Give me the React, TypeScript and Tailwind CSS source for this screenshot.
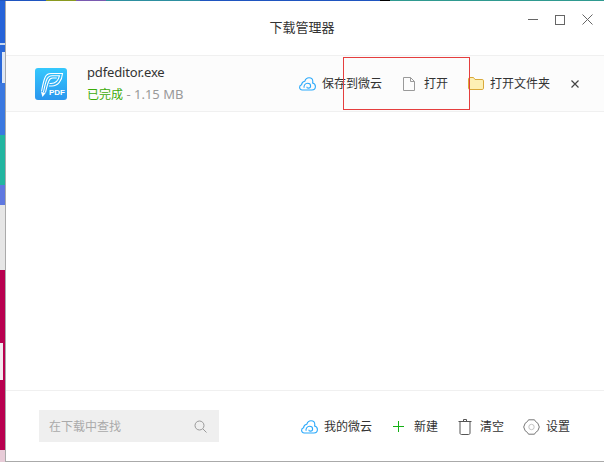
const FONT = "font-['Noto_Sans','Noto_Sans_CJK_SC',sans-serif]";

function CloudIcon() {
  return (
    <svg className="w-[17px] h-[14px]" viewBox="0 0 17 14" fill="none" stroke="#2aa9fb" strokeWidth="1.100">
      <path d="M4.500 13H3.200C1.600 13 .6 11.700.6 10.300c0-1.300.9-2.300 2-2.600C2.700 5.800 4 4.400 5.800 4.200 6.500 2.200 8 .8 10 .8c2.300 0 3.800 1.700 3.800 3.800 0 .6-.1 1-.2 1.400 1.600.4 2.800 1.800 2.800 3.500 0 2.100-1.600 3.500-3.500 3.500H4.500z" />
      <path d="M5.200 10.800C4.400 8.600 6.200 6.300 8.500 6.300c1.800 0 3.100 1.200 3.100 2.700 0 1.200-1 2.100-2.100 2.100-1 0-1.700-.6-1.700-1.400" />
    </svg>
  );
}

function FileIcon() {
  return (
    <svg className="w-[12px] h-[14px]" viewBox="0 0 12 14" fill="none" stroke="#9a9a9a">
      <path d="M.5.5h7l4 4v9h-11zM7.500.5v4h4" />
    </svg>
  );
}

function FolderIcon() {
  return (
    <svg className="w-[16px] h-[13px]" viewBox="0 0 16 13">
      <path d="M.5 2c0-.8.5-1.500 1.300-1.500h3.700l1.500 2h7.200c.8 0 1.300.5 1.300 1.300v7.400c0 .8-.5 1.300-1.300 1.300H1.800c-.8 0-1.300-.5-1.300-1.300z" fill="#fdf0b4" stroke="#d9a93a" />
    </svg>
  );
}

function PdfLogo() {
  return (
    <div className="w-[32px] h-[32px] rounded-[3px] bg-gradient-to-b from-[#35c8fd] to-[#2b96ee] relative overflow-hidden">
      <svg className="absolute inset-0" viewBox="0 0 32 32" fill="none" stroke="#fff" strokeWidth="1.100">
        <path d="M6.500 23.500C7.500 18 8.500 13 10 9.500 11 7 13 5.500 16 5.500h11.500c-.5 7-4.500 12.500-10.500 12.500h-3" />
        <path d="M8.500 24C9.500 19 10.500 14 12 11c1-2 2.500-3.300 5-3.300h7.500C23.500 12 20.500 15.500 16 15.500h-1.500" />
        <path d="M10.500 24.500C11.500 20 12.500 16 13.800 13c.8-1.800 2-3 3.700-3h4.300" />
        <path d="M6 24l4.800.8L7.500 29z" fill="#fff" stroke="none" />
      </svg>
      <span className="absolute left-[14px] top-[20px] text-[8px] leading-[10px] font-bold text-white font-['Liberation_Sans',sans-serif]">PDF</span>
    </div>
  );
}

function TrashIcon() {
  return (
    <svg className="w-[14px] h-[16px]" viewBox="0 0 14 16" fill="none" stroke="#555">
      <path d="M.5 2.500h13M5.500 2.500V.5h3v2M2 2.500v11.500c0 .8.5 1.500 1.300 1.500h7.400c.8 0 1.300-.7 1.300-1.500V2.500" />
    </svg>
  );
}

function GearIcon() {
  return (
    <svg className="w-[17px] h-[16px]" viewBox="0 0 17 16" fill="none">
      <path d="M5.500.8h6l1 1.700 2.300 1.700 1.500 3.800-1.500 3.800-2.300 1.700-1 1.700h-6l-1-1.700-2.300-1.700L.7 8l1.500-3.800 2.300-1.700z" stroke="#777" strokeLinejoin="round" />
      <circle cx="8.500" cy="8" r="2.700" stroke="#c4c4c4" />
    </svg>
  );
}

function ToolbarItem({ icon, label, gap }: { icon: React.ReactNode; label: string; gap: string }) {
  return (
    <div className={`flex items-center ${gap}`}>
      {icon}
      <span className="text-[12px] text-[#333]">{label}</span>
    </div>
  );
}

export default function App() {
  return (
    <div className={`w-[604px] h-[462px] flex overflow-hidden relative ${FONT}`}>
      {/* bits of the desktop behind the window */}
      <div className="w-[5px] flex flex-col shrink-0">
        <div className="h-[43px] bg-[#2563d8]" />
        <div className="h-[2px] bg-[#c8d8f0]" />
        <div className="h-[7px] bg-[#2a68d8]" />
        <div className="h-[31px] flex bg-[#2a68d8]">
          <div className="w-[2px]" />
          <div className="w-[3px] bg-[#dfe8f5]" />
        </div>
        <div className="h-[52px] bg-[#3a78e0]" />
        <div className="h-[50px] bg-[#22b5a0]" />
        <div className="h-[20px] bg-[#5f78e0]" />
        <div className="h-[65px] bg-[#e6e6e6]" />
        <div className="h-[73px] bg-[#b8004f]" />
        <div className="h-[37px] flex bg-[#b8004f]">
          <div className="w-[3px] bg-[#f3e8ee]" />
        </div>
        <div className="h-[70px] bg-[#b8004f]" />
        <div className="flex-1 bg-[#e8ccd8]" />
      </div>
      <div className="flex-1 flex flex-col bg-white mt-px mb-px border-l border-[#aaa] shadow-[0_1px_0_#aaa]">
        <header className="h-[54px] shrink-0 flex items-center justify-center relative pr-[6px]">
          <span className="text-[13px] text-[#333]">下载管理器</span>
          <div className="absolute right-[11px] top-[13px] flex items-center gap-[17px]">
            <div className="w-[10px] h-[1px] bg-[#666]" />
            <div className="w-[10px] h-[10px] border border-[#666]" />
            <svg className="w-[11px] h-[11px]" viewBox="0 0 11 11" stroke="#666">
              <path d="M.5.5l10 10M10.500.5l-10 10" />
            </svg>
          </div>
        </header>

        <div className="h-[57px] shrink-0 bg-[#fcfcfc] border-y border-[#f0f0f0] flex items-center pl-[29px] pr-[25px]">
          <PdfLogo />
          <div className="ml-[20px] flex flex-col gap-[6px]">
            <span className="text-[13px] leading-[16px] tracking-[-0.15px] text-[#333]">pdfeditor.exe</span>
            <span className="text-[13px] leading-[16px] text-[#999]">
              <span className="text-[12px] text-[#3cab0a]">已完成</span> - 1.15 MB
            </span>
          </div>
          <div className="ml-auto flex items-center">
            <ToolbarItem icon={<CloudIcon />} label="保存到微云" gap="gap-[6px]" />
            <div className="ml-[21px]"><ToolbarItem icon={<FileIcon />} label="打开" gap="gap-[9px]" /></div>
            <div className="ml-[20px]"><ToolbarItem icon={<FolderIcon />} label="打开文件夹" gap="gap-[6px]" /></div>
            <svg className="ml-[21px] w-[8px] h-[8px]" viewBox="0 0 8 8" stroke="#444" strokeWidth="1.200">
              <path d="M.5.5l7 7M7.500.5l-7 7" />
            </svg>
          </div>
        </div>

        <div className="flex-1" />

        <footer className="h-[71px] shrink-0 border-t border-[#f0f0f0] flex items-center pl-[33px] pr-[34px]">
          <div className="w-[180px] h-[32px] bg-[#efefef] flex items-center justify-between pl-[10px] pr-[12px]">
            <span className="text-[12px] text-[#aaa] pt-px">在下载中查找</span>
            <svg className="w-[13px] h-[13px]" viewBox="0 0 13 13" fill="none" stroke="#999">
              <circle cx="5.500" cy="5.500" r="4.500" />
              <path d="M9 9l3.500 3.500" />
            </svg>
          </div>
          <div className="ml-auto flex items-center mt-px">
            <ToolbarItem icon={<CloudIcon />} label="我的微云" gap="gap-[6px]" />
            <div className="ml-[21px]">
              <ToolbarItem
                icon={
                  <svg className="w-[11px] h-[11px]" viewBox="0 0 11 11" stroke="#14b014">
                    <path d="M5.500 0v11M0 5.500h11" />
                  </svg>
                }
                label="新建"
                gap="gap-[10px]"
              />
            </div>
            <div className="ml-[20px]"><ToolbarItem icon={<TrashIcon />} label="清空" gap="gap-[8px]" /></div>
            <div className="ml-[19px]"><ToolbarItem icon={<GearIcon />} label="设置" gap="gap-[6px]" /></div>
          </div>
        </footer>
      </div>

      {/* selection rectangle over the row */}
      <div className="absolute left-[343px] top-[57px] w-[127px] h-[53px] border border-[#e53e3e]" />
      {/* top strip of the desktop */}
      <div className="absolute left-0 right-0 top-0 h-px flex">
        <div className="w-[46px] bg-[#1f55c0]" />
        <div className="w-[30px] bg-[#8a9a20]" />
        <div className="w-[30px] bg-[#7a5ab0]" />
        <div className="w-[94px] bg-[#2d8fa0]" />
        <div className="w-[180px] bg-[#1f55c0]" />
        <div className="w-[10px] bg-black" />
        <div className="flex-1 bg-[#2f9a90]" />
      </div>
    </div>
  );
}
